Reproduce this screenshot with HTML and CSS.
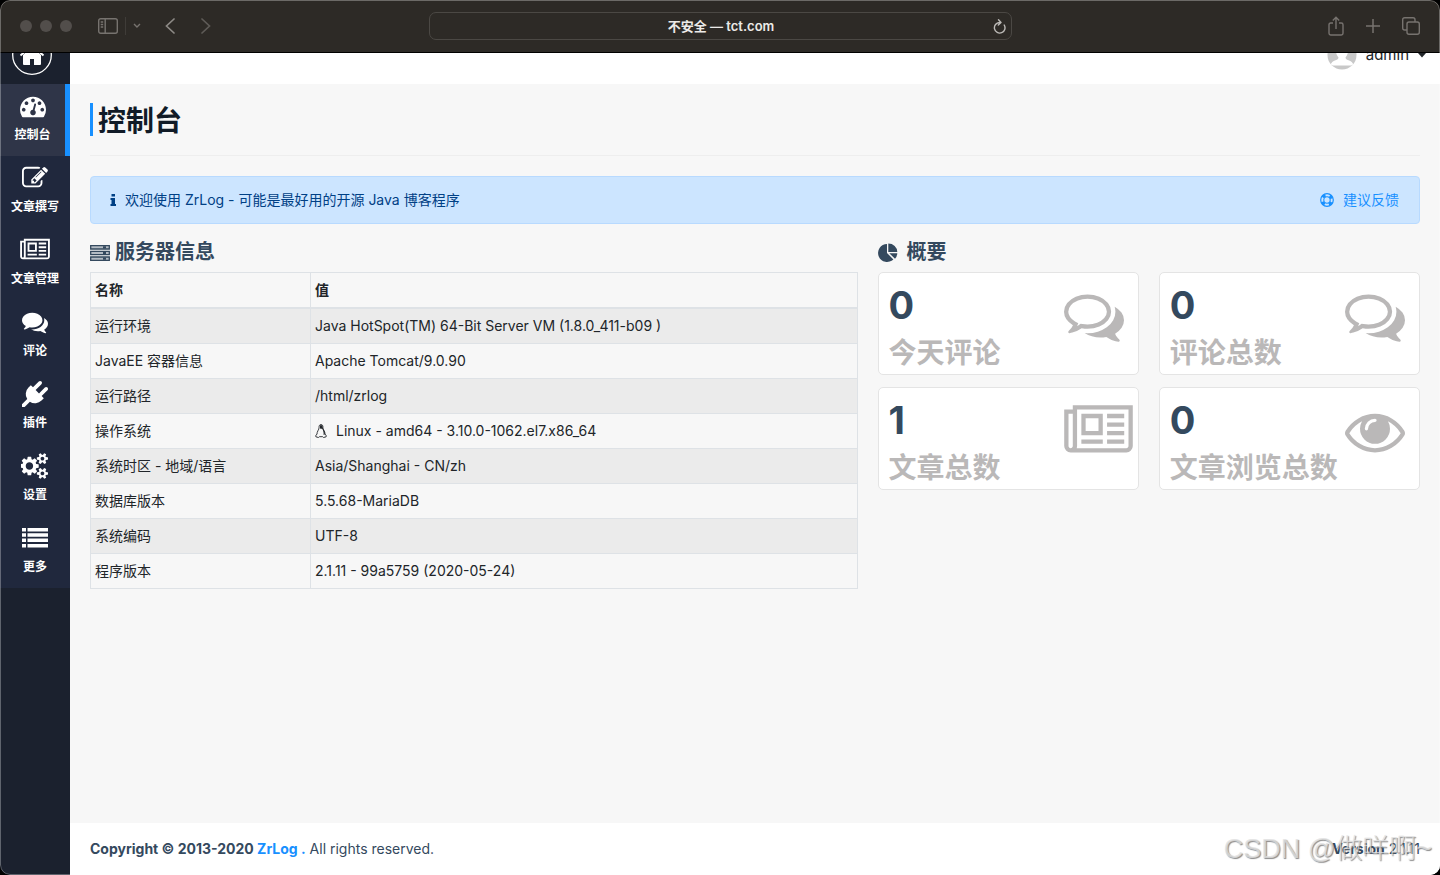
FILE: index.html
```html
<!DOCTYPE html>
<html lang="zh-CN">
<head>
<meta charset="utf-8">
<meta name="viewport" content="width=device-width, initial-scale=1">
<title>控制台 - ZrLog</title>
<link rel="stylesheet" href="styles.css">
</head>
<body>
<svg class="sprite" aria-hidden="true">
  <symbol id="comments-o" viewBox="0 0 1792 1792"><path d="M704 384q-153 0-286 52t-211.5 141-78.5 191q0 82 53 158t149 132l97 56-35 84q34-20 62-39l44-31 53 10q78 14 153 14 153 0 286-52t211.5-141 78.5-191-78.5-191-211.5-141-286-52zm0-128q191 0 353.5 68.5t256.5 186.5 94 257-94 257-256.5 186.5-353.5 68.5q-86 0-176-16-124 88-278 128-36 9-86 16h-3q-11 0-20.5-8t-11.5-21q-1-3-1-6.5t.5-6.5 2-6l2.5-5 3.5-5.5 4-5 4.5-5 4-4.5q5-6 23-25t26-29.5 22.5-29 25-38.5 20.5-44q-124-72-195-177t-71-224q0-139 94-257t256.5-186.5 353.5-68.5zm822 1169q10 24 20.5 44t25 38.5 22.5 29 26 29.5 23 25q1 1 4 4.5t4.5 5 4 5 3.5 5.5l2.5 5 2 6 .5 6.5-1 6.5q-3 14-13 22t-22 7q-50-7-86-16-154-40-278-128-90 16-176 16-271 0-472-132 58 4 88 4 161 0 309-45t264-129q125-92 192-212t67-254q0-77-23-152 129 71 204 178t75 230q0 120-71 224.5t-195 176.5z"/></symbol>
  <symbol id="newspaper" viewBox="0 0 2048 1792"><path d="M1024 512h-384v384h384v-384zm128 640v128h-640v-128h640zm0-768v640h-640v-640h640zm640 768v128h-512v-128h512zm0-256v128h-512v-128h512zm0-256v128h-512v-128h512zm0-256v128h-512v-128h512zm-1536 960v-960h-128v960q0 26 19 45t45 19 45-19 19-45zm1664 0v-1088h-1536v1088q0 33-11 64h1483q26 0 45-19t19-45zm128-1216v1216q0 80-56 136t-136 56h-1664q-80 0-136-56t-56-136v-1088h256v-128h1792z"/></symbol>
</svg>
<div class="window">
  <header class="toolbar">
    <div class="toolbar-side">
      <div class="lights"><i class="light"></i><i class="light"></i><i class="light"></i></div>
      <button class="tool tool-sidebar" aria-label="边栏"><svg width="20" height="16" viewBox="0 0 20 16" fill="none" stroke="currentColor" stroke-width="1.4"><rect x=".7" y=".7" width="18.6" height="14.6" rx="2"/><path d="M7.2.7v14.6M2.7 4h2.5M2.7 6.5h2.5M2.7 9h2.5"/></svg></button>
      <span class="tool-rule"></span>
      <button class="tool tool-more" aria-label="标签页组"><svg width="8" height="6" viewBox="0 0 8 6" fill="none" stroke="currentColor" stroke-width="1.4"><path d="M1 1l3 3 3-3"/></svg></button>
      <button class="tool tool-back" aria-label="后退"><svg width="10" height="16" viewBox="0 0 10 16" fill="none" stroke="currentColor" stroke-width="1.7" stroke-linecap="round"><path d="M9 1L1.500 8 9 15"/></svg></button>
      <button class="tool tool-next" aria-label="前进"><svg width="10" height="16" viewBox="0 0 10 16" fill="none" stroke="currentColor" stroke-width="1.700" stroke-linecap="round"><path d="M1 1l7.500 7L1 15"/></svg></button>
    </div>
    <div class="address">
      <span class="address-text">不安全 — tct.com</span>
      <button class="tool reload" aria-label="重新载入"><svg width="13" height="15" viewBox="0 0 13 15" fill="none" stroke="currentColor" stroke-width="1.4" stroke-linecap="round" stroke-linejoin="round"><path d="M11.200 6A5.300 5.300 0 1 1 6.500 3.500h1.200M5.500.8l2.500 2.700-2.700 2.500"/></svg></button>
    </div>
    <div class="toolbar-side toolbar-right">
      <button class="tool" aria-label="共享"><svg width="16" height="20" viewBox="0 0 16 20" fill="none" stroke="currentColor" stroke-width="1.400"><path d="M5 7H2.700Q1 7 1 8.700v8.600Q1 19 2.700 19h10.600q1.700 0 1.700-1.700V8.700Q15 7 13.300 7H11M8 13V1.500M4.800 4.500L8 1.300l3.200 3.200"/></svg></button>
      <button class="tool" aria-label="新标签页"><svg width="14" height="14" viewBox="0 0 14 14" fill="none" stroke="currentColor" stroke-width="1.500"><path d="M7 0v14M0 7h14"/></svg></button>
      <button class="tool" aria-label="标签页概览"><svg width="18" height="18" viewBox="0 0 18 18" fill="none" stroke="currentColor" stroke-width="1.400"><rect x="5" y="5" width="12.300" height="12.300" rx="2"/><path d="M5 13H2.700Q.7 13 .7 11V2.700Q.7.700 2.700.700H11q2 0 2 2V5"/></svg></button>
    </div>
  </header>
  <div class="page">
    <nav class="sidebar">
      <a class="home" href="#" aria-label="首页"><svg width="40" height="40" viewBox="0 0 40 40"><circle cx="20" cy="20" r="19.300" fill="none" stroke="#fff" stroke-width="1.300"/><path fill="#fff" d="M20 12L11 20v9q0 1 1 1h6v-6h4v6h6q1 0 1-1v-9z"/><path fill="none" stroke="#fff" stroke-width="2" d="M8.500 20.500L20 10.500l11.500 10"/></svg></a>
      <a class="item active" href="#"><svg class="item-icon" viewBox="0 0 1792 1792"><path d="M384 1152q0-53-37.5-90.5t-90.5-37.5-90.5 37.5-37.5 90.5 37.5 90.5 90.5 37.5 90.5-37.5 37.5-90.5zm192-448q0-53-37.5-90.5t-90.5-37.5-90.5 37.5-37.5 90.5 37.5 90.5 90.5 37.5 90.5-37.5 37.5-90.5zm428 481l101-382q6-26-7.5-48.5t-38.5-29.5-48 6.5-30 39.5l-101 382q-60 5-107 43.5t-63 98.5q-20 77 20 146t117 89 146-20 89-117q16-60-6-117t-72-91zm660-33q0-53-37.5-90.5t-90.5-37.5-90.5 37.5-37.5 90.5 37.5 90.5 90.5 37.5 90.5-37.5 37.5-90.5zm-640-640q0-53-37.5-90.5t-90.5-37.5-90.5 37.5-37.5 90.5 37.5 90.5 90.5 37.5 90.5-37.5 37.5-90.5zm448 192q0-53-37.5-90.5t-90.5-37.5-90.5 37.5-37.5 90.5 37.5 90.5 90.5 37.5 90.5-37.5 37.5-90.5zm320 448q0 261-141 483-19 29-54 29h-1402q-35 0-54-29-141-221-141-483 0-182 71-348t191-286 286-191 348-71 348 71 286 191 191 286 71 348z"/></svg><span>控制台</span></a>
      <a class="item" href="#"><svg class="item-icon" viewBox="0 0 1792 1792"><path d="M888 1184l116-116-152-152-116 116v56h96v96h56zm440-720q-16-16-33 1l-350 350q-17 17-1 33t33-1l350-350q17-17 1-33zm80 594v190q0 119-84.5 203.5t-203.5 84.5h-832q-119 0-203.5-84.5t-84.5-203.5v-832q0-119 84.5-203.5t203.5-84.5h832q63 0 117 25 15 7 18 23 3 17-9 29l-49 49q-14 14-32 8-23-6-45-6h-832q-66 0-113 47t-47 113v832q0 66 47 113t113 47h832q66 0 113-47t47-113v-126q0-13 9-22l64-64q15-15 35-7t20 29zm-96-738l288 288-672 672h-288v-288zm444 132l-92 92-288-288 92-92q28-28 68-28t68 28l152 152q28 28 28 68t-28 68z"/></svg><span>文章撰写</span></a>
      <a class="item" href="#"><svg class="item-icon wide"><use href="#newspaper"/></svg><span>文章管理</span></a>
      <a class="item" href="#"><svg class="item-icon" viewBox="0 0 1792 1792"><path d="M1408 768q0 139-94 257t-256.5 186.5-353.5 68.5q-86 0-176-16-124 88-278 128-36 9-86 16h-3q-11 0-20.5-8t-11.5-21q-1-3-1-6.5t.5-6.5 2-6l2.5-5 3.5-5.5 4-5 4.5-5 4-4.5q5-6 23-25t26-29.5 22.5-29 25-38.5 20.5-44q-124-72-195-177t-71-224q0-139 94-257t256.5-186.5 353.5-68.5 353.5 68.5 256.5 186.5 94 257zm384 256q0 120-71 224.5t-195 176.5q10 24 20.5 44t25 38.5 22.5 29 26 29.5 23 25q1 1 4 4.5t4.5 5 4 5 3.5 5.5l2.500 5 2 6 .5 6.5-1 6.5q-3 14-13 22t-22 7q-50-7-86-16-154-40-278-128-90 16-176 16-271 0-472-132 58 4 88 4 161 0 309-45t264-129q125-92 192-212t67-254q0-77-23-152 129 71 204 178t75 230z"/></svg><span>评论</span></a>
      <a class="item" href="#"><svg class="item-icon" viewBox="0 0 1792 1792"><path d="M1755 453q37 38 37 90.5t-37 90.5l-401 400 150 150-160 160q-163 163-389.5 186.5t-411.5-100.5l-362 362h-181v-181l362-362q-124-185-100.5-411.5t186.5-389.5l160-160 150 150 400-401q38-37 91-37t90 37 37 90.5-37 90.5l-400 401 234 234 401-400q38-37 91-37t90 37z"/></svg><span>插件</span></a>
      <a class="item" href="#"><svg class="item-icon cogs" viewBox="0 0 1920 1792"><path d="M832 896q0-106-75-181t-181-75-181 75-75 181 75 181 181 75 181-75 75-181zm768 512q0-52-38-90t-90-38-90 38-38 90q0 53 37.5 90.5t90.5 37.5 90.5-37.5 37.5-90.5zm0-1024q0-52-38-90t-90-38-90 38-38 90q0 53 37.5 90.5t90.5 37.5 90.5-37.5 37.5-90.5zm-384 421v185q0 10-7 19.5t-16 10.5l-155 24q-11 35-32 76 34 48 90 115 7 11 7 20 0 12-7 19-23 30-82.5 89.5t-78.5 59.5q-11 0-21-7l-115-90q-37 19-77 31-11 108-23 155-7 24-30 24h-186q-11 0-20-7.5t-10-17.5l-23-153q-34-10-75-31l-118 89q-7 7-20 7-11 0-21-8-144-133-144-160 0-9 7-19 10-14 41-53t47-61q-23-44-35-82l-152-24q-10-1-17-9.5t-7-19.5v-185q0-10 7-19.5t16-10.5l155-24q11-35 32-76-34-48-90-115-7-11-7-20 0-12 7-20 22-30 82-89t79-59q11 0 21 7l115 90q34-18 77-32 11-108 23-154 7-24 30-24h186q11 0 20 7.5t10 17.5l23 153q34 10 75 31l118-89q8-7 20-7 11 0 21 8 144 133 144 160 0 8-7 19-12 16-42 54t-45 60q23 48 34 82l152 23q10 2 17 10.5t7 19.5zm640 533v140q0 16-149 31-12 27-30 52 51 113 51 138 0 4-4 7-122 71-124 71-8 0-46-47t-52-68q-20 2-30 2t-30-2q-14 21-52 68t-46 47q-2 0-124-71-4-3-4-7 0-25 51-138-18-25-30-52-149-15-149-31v-140q0-16 149-31 13-29 30-52-51-113-51-138 0-4 4-7 4-2 35-20t59-34 30-16q8 0 46 46.5t52 67.5q20-2 30-2t30 2q51-71 92-112l6-2q4 0 124 70 4 3 4 7 0 25-51 138 17 23 30 52 149 15 149 31zm0-1024v140q0 16-149 31-12 27-30 52 51 113 51 138 0 4-4 7-122 71-124 71-8 0-46-47t-52-68q-20 2-30 2t-30-2q-14 21-52 68t-46 47q-2 0-124-71-4-3-4-7 0-25 51-138-18-25-30-52-149-15-149-31v-140q0-16 149-31 13-29 30-52-51-113-51-138 0-4 4-7 4-2 35-20t59-34 30-16q8 0 46 46.5t52 67.5q20-2 30-2t30 2q51-71 92-112l6-2q4 0 124 70 4 3 4 7 0 25-51 138 17 23 30 52 149 15 149 31z"/></svg><span>设置</span></a>
      <a class="item" href="#"><svg class="item-icon" viewBox="0 0 26 26"><path d="M0 3h4v3.500H0zM5.500 3H26v3.500H5.500zM0 8.300h4v3.500H0zM5.500 8.300H26v3.500H5.500zM0 13.600h4v3.500H0zM5.500 13.600H26v3.500H5.500zM0 19h4v3.500H0zM5.500 19H26v3.500H5.500z"/></svg><span>更多</span></a>
    </nav>
    <div class="body">
      <div class="topbar">
        <button class="user">
          <svg class="avatar" viewBox="0 0 30 30"><defs><clipPath id="disc"><circle cx="15" cy="15" r="14.500"/></clipPath></defs><g clip-path="url(#disc)"><path fill="#c8c8c8" d="M0 0h30v30H0z"/><path fill="#fff" d="M15 4c4 0 6 3 6 7 0 3-1.300 5-2.500 6.500.2 1.500 1 2 3 2.800 2.500 1 4.500 2.200 5 5.200H3.500c.5-3 2.500-4.200 5-5.200 2-.8 2.800-1.300 3-2.800C10.300 16 9 14 9 11c0-4 2-7 6-7z"/></g></svg>
          <span>admin</span>
          <svg class="caret" viewBox="0 0 8 5"><path d="M0 0h8L4 4.500z"/></svg>
        </button>
      </div>
      <main class="content">
        <div class="heading"><h1>控制台</h1></div>
        <div class="alert">
          <p><svg class="alert-icon" viewBox="0 0 14 14"><path d="M5.500 1h3.500v2.500H5.500zM4.500 5H9v6h1v2H4.500v-2h1V7h-1z"/></svg>欢迎使用 ZrLog - 可能是最好用的开源 Java 博客程序</p>
          <a href="#"><svg class="alert-icon ring" viewBox="0 0 14 14" fill="none" stroke="currentColor"><circle cx="7" cy="7" r="6.300" stroke-width="1.200"/><circle cx="7" cy="7" r="3.200" stroke-width="1.100"/><circle cx="7" cy="7" r="4.800" stroke-width="2.800" stroke-dasharray="3.200 4.340" stroke-dashoffset="-2.170"/></svg>建议反馈</a>
        </div>
        <div class="columns">
          <section class="server">
            <h2><svg class="h-server" viewBox="0 0 20 16" fill="none" stroke="currentColor" stroke-width="1.300"><path fill="#b4bcc4" d="M.7.700h18.600v3.300H.700zM.7 6.300h18.600v3.300H.700zM.7 12h18.600v3.300H.700z"/><path stroke-width="2.200" d="M13 2.300h3M13 8h3M13 13.700h3"/></svg>服务器信息</h2>
            <table>
              <thead><tr><th scope="col">名称</th><th scope="col">值</th></tr></thead>
              <tbody>
                <tr><td>运行环境</td><td>Java HotSpot(TM) 64-Bit Server VM (1.8.0_411-b09 )</td></tr>
                <tr><td>JavaEE 容器信息</td><td>Apache Tomcat/9.0.90</td></tr>
                <tr><td>运行路径</td><td>/html/zrlog</td></tr>
                <tr><td>操作系统</td><td><svg class="tux" viewBox="0 0 12 14"><path fill="none" stroke="currentColor" stroke-width=".9" d="M6 .6c-1.600 0-2 1.200-1.900 2.600.1 1.500-.5 2.300-1.200 3.600C2.200 8.200 2 9 2 10L.7 11.800l.2 1 2.500.7 1-.8h3.200l1 .8 2.500-.7.200-1L10 10c0-1-.2-1.800-.9-3.200-.7-1.300-1.300-2.100-1.200-3.600C8 1.800 7.600.600 6 .600z"/><path fill="currentColor" d="M5 1.200h2.200l.6 2.600L9.800 8v2.500L8.600 11C8.900 8.500 8.200 6 7 4.500L6 5l-1-.7z"/></svg>Linux - amd64 - 3.10.0-1062.el7.x86_64</td></tr>
                <tr><td>系统时区 - 地域/语言</td><td>Asia/Shanghai - CN/zh</td></tr>
                <tr><td>数据库版本</td><td>5.5.68-MariaDB</td></tr>
                <tr><td>系统编码</td><td>UTF-8</td></tr>
                <tr><td>程序版本</td><td>2.1.11 - 99a5759 (2020-05-24)</td></tr>
              </tbody>
            </table>
          </section>
          <section class="summary">
            <h2><svg class="h-pie" viewBox="0 0 20 20"><path d="M9 10V1a9 9 0 1 0 6.400 15.400z"/><path d="M10.300.5v8.400h9A9 8.400 0 0 0 10.300.5zM11.300 10.300h8a8.800 8.800 0 0 1-2.300 5.500z"/></svg>概要</h2>
            <div class="cards">
              <div class="card"><div><div class="count">0</div><h3>今天评论</h3></div><svg class="card-icon"><use href="#comments-o"/></svg></div>
              <div class="card"><div><div class="count">0</div><h3>评论总数</h3></div><svg class="card-icon"><use href="#comments-o"/></svg></div>
              <div class="card"><div><div class="count">1</div><h3>文章总数</h3></div><svg class="card-icon wide"><use href="#newspaper"/></svg></div>
              <div class="card"><div><div class="count">0</div><h3>文章浏览总数</h3></div><svg class="card-icon" viewBox="0 0 1792 1792"><path d="M1664 960q-152-236-381-353 61 104 61 225 0 185-131.5 316.5t-316.5 131.5-316.5-131.5-131.5-316.5q0-121 61-225-229 117-381 353 133 205 333.5 326.5t434.5 121.5 434.5-121.5 333.5-326.5zm-720-384q0-20-14-34t-34-14q-125 0-214.5 89.5t-89.5 214.5q0 20 14 34t34 14 34-14 14-34q0-86 61-147t147-61q20 0 34-14t14-34zm848 384q0 34-20 69-140 230-376.5 368.5t-499.5 138.5-499.5-139-376.5-368q-20-35-20-69t20-69q140-229 376.5-368t499.5-139 499.5 139 376.5 368q20 35 20 69z"/></svg></div>
            </div>
          </section>
        </div>
      </main>
      <footer class="footer">
        <div><strong>Copyright © 2013-2020 <a href="#">ZrLog .</a></strong> All rights reserved.</div>
        <div><b>Version</b> 2.1.11</div>
      </footer>
    </div>
  </div>
  <div class="watermark">CSDN @做咩啊~</div>
</div>
</body>
</html>
```
FILE: styles.css
```css
* { box-sizing: border-box; }

body {
  margin: 0;
  background: #000;
  font-family: Inter, "Noto Sans CJK SC", sans-serif;
  font-size: 14px;
  line-height: 20px;
  color: #212529;
}

h1, h2, h3, p { margin: 0; }
a { color: #1890ff; text-decoration: none; }
button { font: inherit; color: inherit; background: none; border: 0; padding: 0; }
svg { display: block; flex: none; fill: currentColor; }
svg[fill="none"] { fill: none; }
.sprite { display: none; }

.window {
  position: relative;
  display: flex;
  flex-direction: column;
  min-height: 100vh;
  border-radius: 10px;
  overflow: hidden;
}
.window::after {
  content: "";
  position: absolute;
  inset: 0;
  border: 1px solid rgba(255, 255, 255, 0.3);
  border-radius: 10px;
  pointer-events: none;
}

/* Browser toolbar */
.toolbar {
  display: flex;
  align-items: center;
  height: 53px;
  padding: 0 20px;
  background: #2d2a26;
  border-bottom: 1px solid #000;
  color: #77736f;
}
.toolbar-side { flex: 1; display: flex; align-items: center; }
.toolbar-right { justify-content: flex-end; gap: 22px; }
.lights { display: flex; gap: 8px; margin-right: 26px; }
.light { width: 12px; height: 12px; border-radius: 50%; background: #524e4b; }
.tool-rule { width: 1px; height: 18px; margin: 0 7px; background: #3f3c38; }
.tool-more { margin-right: 24px; }
.tool-back { margin-right: 26px; color: #8c8985; }
.tool-next { color: #5e5b57; }
.address {
  display: flex;
  align-items: center;
  width: 583px;
  height: 28px;
  padding: 0 5px 0 20px;
  border: 1px solid #4b4844;
  border-radius: 7px;
}
.address-text { flex: 1; text-align: center; font-size: 13px; font-weight: 600; color: #eceae8; }
.reload { color: #bdbbb8; }

/* Page frame */
.page { flex: 1; display: flex; }
.sidebar {
  flex: none;
  width: 70px;
  background: #1b212e;
}
.home {
  display: flex;
  align-items: flex-end;
  height: 31px;
  padding: 0 0 9px 12px;
  overflow: hidden;
}
.item {
  display: flex;
  flex-direction: column;
  align-items: center;
  gap: 7px;
  height: 72px;
  padding-top: 9px;
  background: #20283d;
  color: #fff;
  font-size: 12px;
  font-weight: 600;
  line-height: 18px;
}
.item.active { background: #2f3548; border-right: 5px solid #1890ff; }
.item-icon { width: 26px; height: 26px; }
.item-icon.wide { width: 30px; }
.item-icon.cogs { width: 28px; }

.body { flex: 1; display: flex; flex-direction: column; background: #f7f7f7; }
.topbar {
  display: flex;
  justify-content: flex-end;
  align-items: flex-end;
  height: 31px;
  padding: 0 14px 14px 0;
  background: #fff;
  overflow: hidden;
}
.user { display: flex; align-items: center; gap: 9px; font-size: 15px; line-height: 20px; }
.avatar { width: 30px; height: 30px; }
.caret { width: 8px; height: 5px; }

/* Dashboard */
.content { flex: 1; padding: 19px 20px 20px; }
.heading { padding-bottom: 19px; border-bottom: 1px solid #eee; }
h1 {
  padding: 3px 0 0 5px;
  border-left: 3px solid #1890ff;
  font-size: 28px;
  font-weight: 600;
  line-height: 30px;
  color: #111b27;
}
.alert {
  display: flex;
  justify-content: space-between;
  margin: 20px 0 16px;
  padding: 13px 20px 13px 15px;
  border: 1px solid #b8daff;
  border-radius: 4px;
  background: #cce5ff;
  color: #004085;
}
.alert p, .alert a { display: flex; align-items: center; }
.alert-icon { width: 14px; height: 14px; margin-right: 5px; }
.alert-icon.ring { margin-right: 9px; }
.columns { display: grid; grid-template-columns: repeat(12, 1fr); column-gap: 20px; }
.server { grid-column: span 7; }
.summary { grid-column: span 5; }
h2 {
  display: flex;
  align-items: center;
  margin-bottom: 7px;
  font-size: 20px;
  font-weight: 600;
  line-height: 25px;
  color: #34495e;
}
.h-server { width: 20px; height: 16px; margin-right: 5px; }
.h-pie { width: 20px; height: 20px; margin-right: 9px; }

table { width: 100%; border-collapse: collapse; table-layout: fixed; }
th, td { padding: 7px 4px; border: 1px solid #dee2e6; text-align: left; }
th { border-bottom-width: 2px; font-weight: 600; }
th:first-child { width: 220px; }
tbody tr:nth-child(odd) { background: #ebebeb; }
.tux { display: inline-block; width: 12px; height: 14px; margin-right: 9px; vertical-align: -2px; }

.cards { display: grid; grid-template-columns: 1fr 1fr; gap: 12px 20px; }
.card {
  display: grid;
  grid-template-columns: 1fr 74px;
  padding: 5px 0 0 10px;
  border: 1px solid #e4e4e4;
  border-radius: 5px;
  background: #fff;
  color: #bab8b8;
}
.count { font-size: 38px; font-weight: 700; line-height: 54px; color: #34495e; }
h3 { font-size: 28px; font-weight: 700; line-height: 42px; white-space: nowrap; }
.card-icon { width: 60px; height: 60px; margin-top: 8px; }
.card-icon.wide { width: 69px; }

.footer {
  display: flex;
  justify-content: space-between;
  padding: 16px 20px;
  background: #fff;
  color: #34495e;
}
.footer b, .footer strong { font-weight: 700; }
.watermark {
  position: absolute;
  right: 8px;
  bottom: 8px;
  font-family: "Liberation Sans", "Noto Sans CJK SC", sans-serif;
  font-size: 27px;
  font-weight: 300;
  line-height: 36px;
  color: rgba(225, 225, 225, 0.8);
  text-shadow: 1px 1px 1px rgba(110, 110, 110, 0.8);
  pointer-events: none;
}
```
